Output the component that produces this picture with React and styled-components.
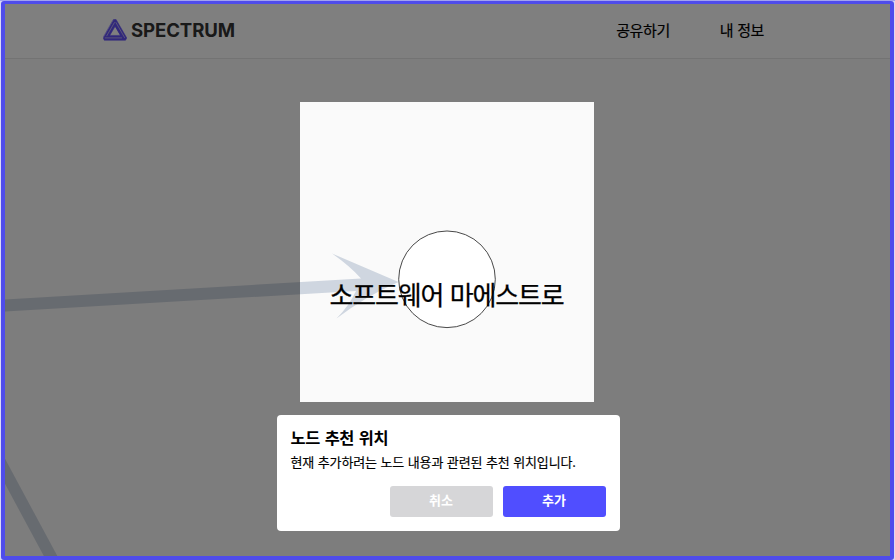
import React from "react";
import styled, { createGlobalStyle } from "styled-components";

const sans = '"Noto Sans CJK KR", "Noto Sans", sans-serif';

const GlobalStyle = createGlobalStyle`
  * { box-sizing: border-box; }
  body { margin: 0; background: #f1f1fb; font-family: ${sans}; }
  button { font: inherit; }
`;

const Window = styled.div`
  height: 560px;
  padding: 1px 1px 0 1px;
  background: linear-gradient(#a3a3ef 0 1px, #d9d9f6 1px);
`;

const Frame = styled.div`
  position: relative;
  display: flex;
  flex-direction: column;
  height: 559px;
  border: 4px solid #4f4ceb;
  border-top-width: 3px;
  border-bottom-width: 4px;
  border-radius: 3px;
  background: #fafafa;
  overflow: hidden;
`;

const Graph = styled.svg`
  position: absolute;
  left: -5px;
  top: -4px;
`;

const Header = styled.header`
  display: flex;
  align-items: center;
  justify-content: space-between;
  flex: none;
  height: 55px;
  padding: 0 126px 2px 98px;
  background: #fff;
  border-bottom: 1px solid #e6e6e6;
`;

const Brand = styled.div`
  display: flex;
  align-items: center;
  gap: 4px;
`;

const BrandName = styled.span`
  font: 700 18.6px/24px Inter, sans-serif;
  letter-spacing: -0.1px;
  color: #333;
`;

const Nav = styled.nav`
  display: flex;
  gap: 50px;
`;

const NavItem = styled.a`
  font-size: 15px;
  line-height: 22px;
  letter-spacing: -0.4px;
  word-spacing: 1px;
  color: #000;
  -webkit-text-stroke: 0.2px #000;
`;

const Stage = styled.main`
  display: flex;
  flex-direction: column;
  align-items: center;
  gap: 13px;
  padding-top: 43px;
`;

const Spotlight = styled.section`
  position: relative;
  display: flex;
  justify-content: center;
  width: 294px;
  height: 300px;
  margin-right: 1px;
  padding-top: 174px;
  box-shadow: 0 0 0 1200px rgba(0, 0, 0, 0.5);
`;

const NodeLabel = styled.span`
  font-size: 26px;
  line-height: 36px;
  letter-spacing: -1.2px;
  word-spacing: 2px;
  margin-right: 1px;
  white-space: nowrap;
  color: #000;
  -webkit-text-stroke: 0.25px #000;
`;

const Dialog = styled.section`
  position: relative;
  width: 343px;
  height: 116px;
  margin-left: 1px;
  padding: 10px 14px 13px;
  border-radius: 4px;
  background: #fff;
  color: #000;
`;

const Title = styled.h2`
  margin: 0;
  font-size: 16.4px;
  font-weight: 700;
  line-height: 24px;
  letter-spacing: -0.4px;
  word-spacing: 1.5px;
`;

const Description = styled.p`
  margin: 2px 0 13px;
  font-size: 13px;
  line-height: 22px;
  letter-spacing: -0.15px;
  word-spacing: 0.9px;
  white-space: nowrap;
  -webkit-text-stroke: 0.15px #000;
`;

const Actions = styled.div`
  display: flex;
  justify-content: flex-end;
  gap: 10px;
`;

const Button = styled.button`
  width: 103px;
  height: 31px;
  padding: 0 0 3px;
  border: 0;
  border-radius: 3px;
  background: ${(p) => (p.$primary ? "#504eff" : "#d6d6d8")};
  color: #fff;
  font-size: 13px;
  font-weight: 700;
  line-height: 28px;
`;

function Logo() {
  return (
    <svg width="24" height="24" viewBox="0 0 24 24" fill="none" strokeLinejoin="round" strokeLinecap="round">
      <path d="M10.7 1.5h2.4L23.8 20l-1.3 2.3H1.3L.2 20zM12 8.6 6.8 17.4H17.2z" fill="#6350f6" fillRule="evenodd" stroke="#6350f6" strokeWidth="0.5" />
      <path d="M2.2 19.9H18.6M13 4.6 21.6 19.6M3.8 17.8 11.4 4.6" stroke="#c9c3f0" strokeWidth="0.8" />
    </svg>
  );
}

export default function App() {
  return (
    <Window>
      <GlobalStyle />
      <Frame>
        <Graph width="895" height="560" viewBox="0 0 895 560">
          <g fill="#cfd6e0">
            <path d="M0 299.8 361 278.5Q350 266 332 253.5L398.5 282Q366 296 336.5 318.5Q349 306 356 291L0 311.9z" />
            <path d="M0 449.5 59.5 560H46L0 474.5z" />
          </g>
          <circle cx="447" cy="279.3" r="48.3" fill="#fff" stroke="#333" strokeWidth="0.9" />
        </Graph>
        <Header>
          <Brand>
            <Logo />
            <BrandName>SPECTRUM</BrandName>
          </Brand>
          <Nav>
            <NavItem>공유하기</NavItem>
            <NavItem>내 정보</NavItem>
          </Nav>
        </Header>
        <Stage>
          <Spotlight>
            <NodeLabel>소프트웨어 마에스트로</NodeLabel>
          </Spotlight>
          <Dialog>
            <Title>노드 추천 위치</Title>
            <Description>현재 추가하려는 노드 내용과 관련된 추천 위치입니다.</Description>
            <Actions>
              <Button>취소</Button>
              <Button $primary>추가</Button>
            </Actions>
          </Dialog>
        </Stage>
      </Frame>
    </Window>
  );
}
